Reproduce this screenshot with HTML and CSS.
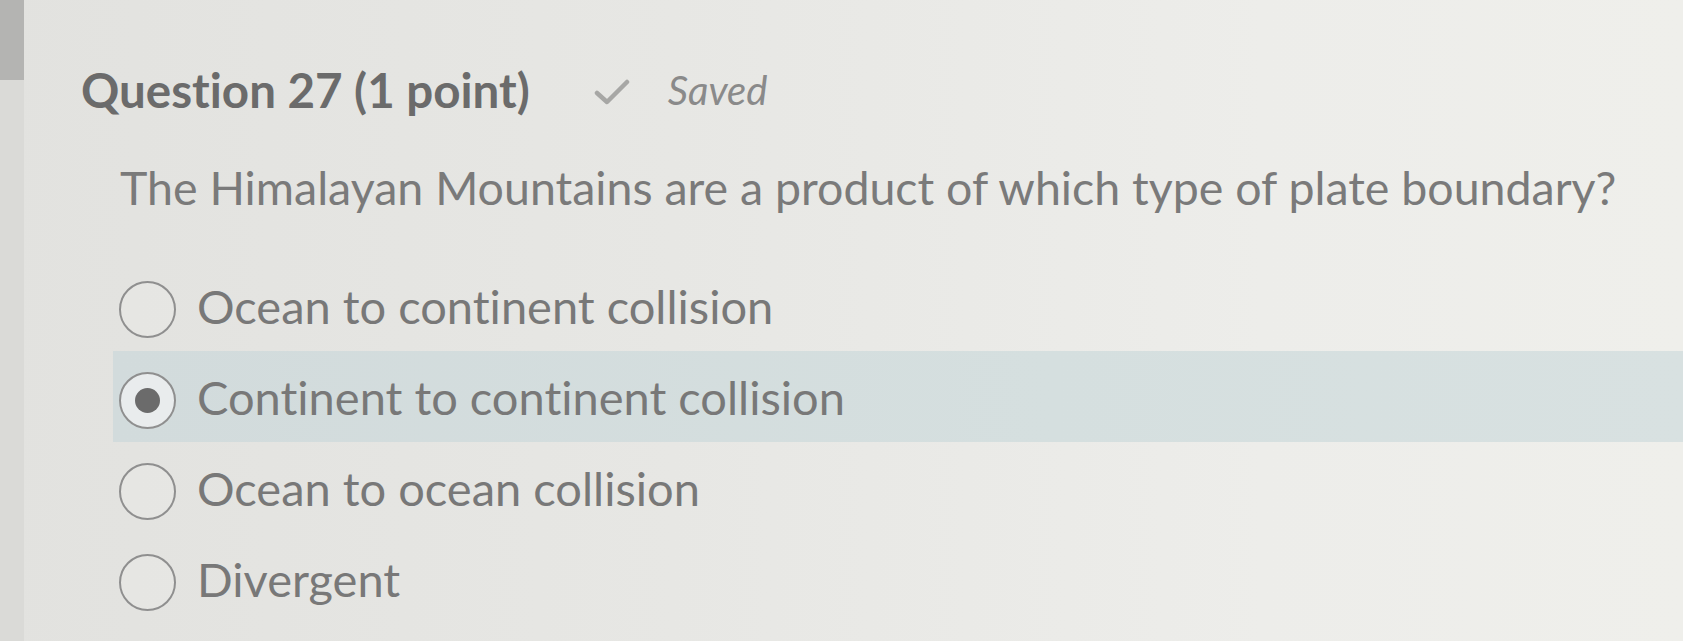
FILE: index.html
```html
<!DOCTYPE html>
<html lang="en">
<head>
<meta charset="utf-8">
<title>Question 27</title>
<link rel="stylesheet" href="styles.css">
</head>
<body>
<div class="page">
  <aside class="rail"><div class="rail-top"></div></aside>
  <main class="content">
    <header class="q-head">
      <h2 class="q-title">Question 27 (1 point)</h2>
      <span class="saved">
        <svg class="check" viewBox="0 0 36 28" width="36" height="28" aria-hidden="true">
          <path d="M3 15 L13 24 L33 4" fill="none" stroke="#a7a7a5" stroke-width="4.5" stroke-linecap="round" stroke-linejoin="round"/>
        </svg>
        <span class="saved-text">Saved</span>
      </span>
    </header>
    <p class="q-text">The Himalayan Mountains are a product of which type of plate boundary?</p>
    <ul class="options">
      <li class="opt"><span class="radio"></span><span class="opt-label">Ocean to continent collision</span></li>
      <li class="opt selected"><span class="radio"><span class="dot"></span></span><span class="opt-label">Continent to continent collision</span></li>
      <li class="opt"><span class="radio"></span><span class="opt-label">Ocean to ocean collision</span></li>
      <li class="opt"><span class="radio"></span><span class="opt-label">Divergent</span></li>
    </ul>
  </main>
</div>
</body>
</html>
```

FILE: styles.css
```css
html, body {
  margin: 0;
  padding: 0;
}
body {
  width: 1683px;
  height: 641px;
  overflow: hidden;
  font-family: Lato, "Open Sans", "Liberation Sans", sans-serif;
  font-variant-ligatures: none;
  background: linear-gradient(90deg, #e2e2df 0%, #e7e7e4 40%, #ededea 75%, #efefeb 100%);
}
.page {
  display: flex;
  height: 641px;
}
.rail {
  width: 24px;
  flex: none;
  background: #dadad7;
  display: flex;
  flex-direction: column;
}
.rail-top {
  height: 80px;
  background: #b4b4b2;
}
.content {
  flex: 1;
  display: flex;
  flex-direction: column;
  padding-top: 63px;
}
.q-head {
  display: flex;
  align-items: center;
  margin-left: 57px;
  height: 54px;
}
.q-title {
  margin: 0;
  font-size: 47.5px;
  line-height: 54px;
  font-weight: 700;
  color: #6b6b6b;
  letter-spacing: 0;
}
.saved {
  display: flex;
  align-items: center;
  margin-left: 64px;
  gap: 38px;
}
.check {
  display: block;
  margin-top: 4px;
}
.saved-text {
  font-size: 40px;
  font-style: italic;
  color: #8a8a8a;
  line-height: 54px;
}
.q-text {
  margin: 42px 0 0 96px;
  font-size: 46.5px;
  line-height: 56px;
  color: #7a7a7a;
}
.options {
  list-style: none;
  margin: 45px 0 0 89px;
  padding: 0;
  display: flex;
  flex-direction: column;
}
.opt {
  height: 91px;
  display: flex;
  align-items: center;
  padding-left: 6px;
  gap: 21px;
}
.opt.selected {
  background: linear-gradient(90deg, #d2dbdc 0%, #d5dfdf 60%, #d8e1e1 100%);
}
.radio {
  width: 53px;
  height: 53px;
  flex: none;
  border: 2px solid #8f8f8f;
  border-radius: 50%;
  display: flex;
  align-items: center;
  justify-content: center;
  margin-top: 8px;
  background: rgba(255, 255, 255, 0.12);
}
.selected .radio {
  background: #e9eced;
}
.dot {
  width: 25px;
  height: 25px;
  border-radius: 50%;
  background: #6b6b6b;
}
.opt-label {
  font-size: 47px;
  line-height: 56px;
  color: #787878;
}
```
